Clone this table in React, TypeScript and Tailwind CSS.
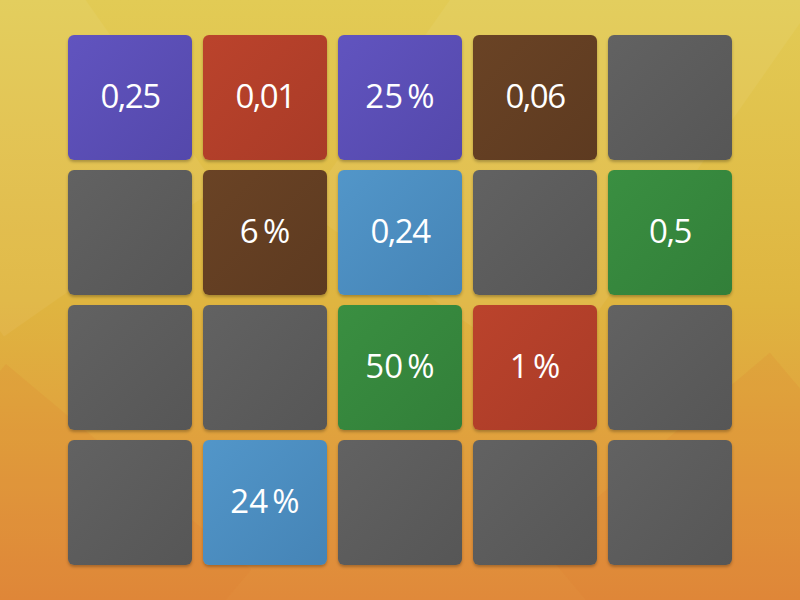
const TILES: { label?: string; color: string }[] = [
  { label: '0,25', color: 'from-[#6154bf] to-[#5448ab]' },
  { label: '0,01', color: 'from-[#bb432c] to-[#a93b27]' },
  { label: '25\u202f%', color: 'from-[#6154bf] to-[#5448ab]' },
  { label: '0,06', color: 'from-[#6a4325] to-[#5d3a20]' },
  { color: 'from-[#626262] to-[#565656]' },

  { color: 'from-[#626262] to-[#565656]' },
  { label: '6\u202f%', color: 'from-[#6a4325] to-[#5d3a20]' },
  { label: '0,24', color: 'from-[#5296c9] to-[#4584b6]' },
  { color: 'from-[#626262] to-[#565656]' },
  { label: '0,5', color: 'from-[#3a8f41] to-[#327f39]' },

  { color: 'from-[#626262] to-[#565656]' },
  { color: 'from-[#626262] to-[#565656]' },
  { label: '50\u202f%', color: 'from-[#3a8f41] to-[#327f39]' },
  { label: '1\u202f%', color: 'from-[#bb432c] to-[#a93b27]' },
  { color: 'from-[#626262] to-[#565656]' },

  { color: 'from-[#626262] to-[#565656]' },
  { label: '24\u202f%', color: 'from-[#5296c9] to-[#4584b6]' },
  { color: 'from-[#626262] to-[#565656]' },
  { color: 'from-[#626262] to-[#565656]' },
  { color: 'from-[#626262] to-[#565656]' },
];

export default function App() {
  return (
    <div className="relative w-[800px] h-[600px] overflow-hidden bg-gradient-to-b from-[#e2cb55] via-[#dfb540] to-[#e0893a]">
      {/* faint diagonal panels */}
      <div className="absolute inset-0 pointer-events-none">
        <div className="absolute -top-40 left-[420px] w-[300px] h-[500px] rotate-[35deg] bg-white/5" />
        <div className="absolute top-[-120px] left-[-140px] w-[260px] h-[420px] rotate-[-35deg] bg-white/5" />
        <div className="absolute top-[420px] left-[-160px] w-[320px] h-[400px] rotate-[40deg] bg-[#e0782f]/15" />
        <div className="absolute top-[400px] left-[640px] w-[300px] h-[420px] rotate-[-40deg] bg-[#e0782f]/15" />
      </div>

      <div className="relative pt-[35px] pl-[68px]">
        <div className="grid grid-cols-[repeat(5,124px)] auto-rows-[125px] gap-x-[11px] gap-y-[10px]">
          {TILES.map((t, i) => (
            <div
              key={i}
              className={`flex items-center justify-center pb-[5px] rounded-[6px] bg-gradient-to-br ${t.color} shadow-[0_2px_3px_rgba(0,0,0,0.25)]`}
            >
              {t.label && (
                <span className="text-white text-[33px] font-['Open_Sans',sans-serif] leading-none tracking-[-1.5px]">
                  {t.label}
                </span>
              )}
            </div>
          ))}
        </div>
      </div>
    </div>
  );
}
